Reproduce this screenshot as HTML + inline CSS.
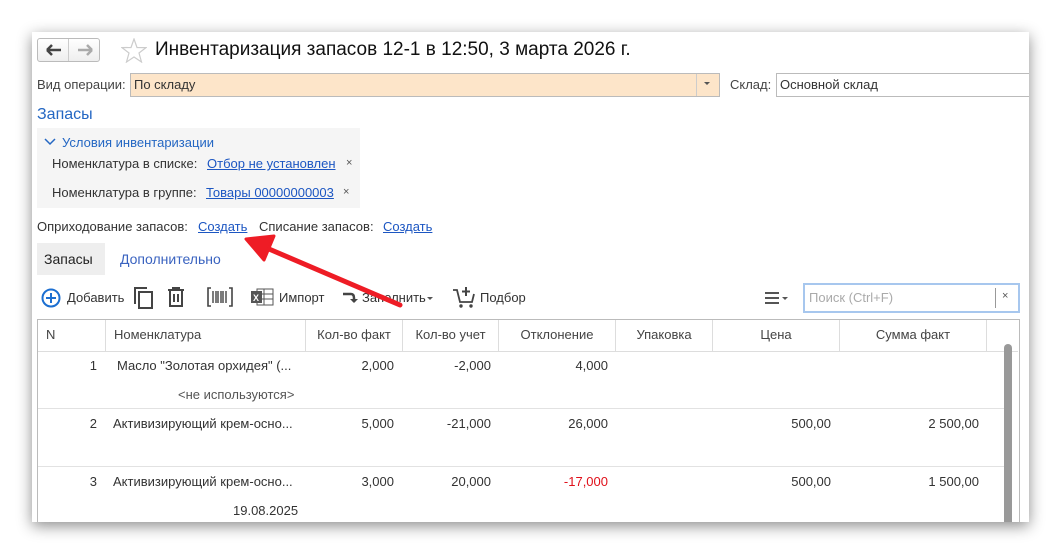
<!DOCTYPE html>
<html><head><meta charset="utf-8"><style>
*{margin:0;padding:0;box-sizing:border-box}
body{width:1061px;height:556px;background:#fff;font-family:"Liberation Sans",Arial,sans-serif;font-size:13px;color:#333;position:relative;overflow:hidden}
.a{position:absolute;white-space:nowrap}
.win{position:absolute;left:32px;top:32px;width:997px;height:490px;background:#fff;box-shadow:0 4px 14px rgba(0,0,0,.45);overflow:hidden}
.lnk{color:#1c56c2;text-decoration:underline}
.blue{color:#2467c3}
.th{position:absolute;top:0;height:31px;line-height:30px;border-right:1px solid #ddd;color:#444}
.r{text-align:right}
</style></head><body>
<div class="win">
 <div class="a" style="left:5px;top:6px;width:63px;height:24px;border:1px solid #bbb;border-radius:3px;background:linear-gradient(#fff,#eee)"></div>
 <div class="a" style="left:36px;top:7px;width:1px;height:22px;background:#ccc"></div>
 <svg class="a" style="left:14px;top:12px" width="16" height="12"><path d="M1 6H15M1 6L6 1M1 6L6 11" stroke="#444" stroke-width="2.5" fill="none"/></svg>
 <svg class="a" style="left:45px;top:12px" width="16" height="12"><path d="M1 6H15M15 6L10 1M15 6L10 11" stroke="#aaa" stroke-width="2.5" fill="none"/></svg>
 <svg class="a" style="left:89px;top:6px" width="26" height="25"><path d="M13 1L16 9.5L25 9.6L18 15L20.5 24L13 19L5.5 24L8 15L1 9.6L10 9.5Z" fill="none" stroke="#ccc" stroke-width="1.2"/></svg>
 <div class="a" style="left:123px;top:7px;font-size:19px;color:#111">Инвентаризация запасов 12-1 в 12:50, 3 марта 2026 г.</div>

 <div class="a" style="left:5px;top:45px;color:#444">Вид операции:</div>
 <div class="a" style="left:98px;top:41px;width:590px;height:24px;border:1px solid #bbb;background:#fde5c9;padding:3px 3px;color:#333">По складу</div>
 <div class="a" style="left:664px;top:42px;width:1px;height:22px;background:#ccc"></div>
 <div class="a" style="left:672px;top:50px;border-left:3px solid transparent;border-right:3px solid transparent;border-top:3px solid #555"></div>
 <div class="a" style="left:698px;top:45px;color:#444">Склад:</div>
 <div class="a" style="left:744px;top:41px;width:260px;height:24px;border:1px solid #bbb;padding:3px 3px;color:#333">Основной склад</div>

 <div class="a blue" style="left:5px;top:74px;font-size:16px">Запасы</div>
 <div class="a" style="left:5px;top:96px;width:323px;height:80px;background:#f5f5f5"></div>
 <svg class="a" style="left:12px;top:106px" width="12" height="8"><path d="M1 1L6 6L11 1" stroke="#2467c3" stroke-width="1.5" fill="none"/></svg>
 <div class="a blue" style="left:30px;top:103px">Условия инвентаризации</div>
 <div class="a" style="left:20px;top:124px;color:#333">Номенклатура в списке:</div>
 <div class="a lnk" style="left:175px;top:124px">Отбор не установлен</div>
 <div class="a" style="left:314px;top:125px;color:#555;font-size:11px">×</div>
 <div class="a" style="left:20px;top:153px;color:#333">Номенклатура в группе:</div>
 <div class="a lnk" style="left:174px;top:153px">Товары 00000000003</div>
 <div class="a" style="left:311px;top:154px;color:#555;font-size:11px">×</div>

 <div class="a" style="left:5px;top:187px">Оприходование запасов:</div>
 <div class="a lnk" style="left:166px;top:187px">Создать</div>
 <div class="a" style="left:227px;top:187px">Списание запасов:</div>
 <div class="a lnk" style="left:351px;top:187px">Создать</div>

 <div class="a" style="left:5px;top:211px;width:68px;height:32px;background:#eee"></div>
 <div class="a" style="left:12px;top:219px;font-size:14px;color:#222">Запасы</div>
 <div class="a" style="left:88px;top:219px;font-size:14px;color:#3a63c0">Дополнительно</div>

 <svg class="a" style="left:9px;top:256px" width="20" height="20"><circle cx="10" cy="10" r="8.5" fill="none" stroke="#1c6fd1" stroke-width="2"/><path d="M10 5V15M5 10H15" stroke="#1c6fd1" stroke-width="2"/></svg>
 <div class="a" style="left:35px;top:258px;color:#333">Добавить</div>
 <svg class="a" style="left:101px;top:254px" width="22" height="24"><path d="M2 18V2H14" stroke="#444" stroke-width="2" fill="none"/><rect x="6" y="6" width="13" height="16" stroke="#444" stroke-width="2" fill="none"/></svg>
 <svg class="a" style="left:135px;top:255px" width="18" height="20"><path d="M1 3H17M6 3V1H12V3M3 3V19H15V3M7 7V15M11 7V15" stroke="#444" stroke-width="2" fill="none"/></svg>
 <svg class="a" style="left:175px;top:255px" width="26" height="20"><path d="M4 1H1V19H4M22 1H25V19H22" stroke="#444" stroke-width="1.6" fill="none"/><path d="M6 4V16M9 4V16M11 4V16M14 4V16M16 4V16M19 4V16" stroke="#444" stroke-width="1.4"/></svg>
 <svg class="a" style="left:218px;top:256px" width="24" height="18"><rect x="7" y="1" width="16" height="16" fill="none" stroke="#555"/><path d="M7 6H23M7 11H23M14 1V17" stroke="#555"/><rect x="1" y="3" width="11" height="12" fill="#555"/><text x="3" y="13" font-size="9" fill="#fff" font-family="Liberation Sans" font-weight="bold">X</text></svg>
 <div class="a" style="left:247px;top:258px">Импорт</div>
 <svg class="a" style="left:310px;top:258px" width="16" height="14"><path d="M1 4H9Q12 4 12 8V12" stroke="#444" stroke-width="2.5" fill="none"/><path d="M8 9L12 13L16 9" fill="#444"/></svg>
 <div class="a" style="left:330px;top:258px">Заполнить</div>
 <div class="a" style="left:395px;top:265px;border-left:3px solid transparent;border-right:3px solid transparent;border-top:3px solid #555"></div>
 <svg class="a" style="left:420px;top:253px" width="24" height="24"><path d="M1 5H5L8 17H20L22 9" stroke="#444" stroke-width="1.8" fill="none"/><path d="M14 2V11M10 6.5H18" stroke="#444" stroke-width="2"/><circle cx="9" cy="21" r="1.7" fill="#444"/><circle cx="19" cy="21" r="1.7" fill="#444"/></svg>
 <div class="a" style="left:448px;top:258px">Подбор</div>

 <svg class="a" style="left:732px;top:259px" width="26" height="14"><path d="M1 2H15M1 7H15M1 12H15" stroke="#555" stroke-width="2"/><path d="M18 6H24L21 9Z" fill="#555"/></svg>
 <div class="a" style="left:771px;top:251px;width:217px;height:30px;border:2px solid #a7c7ee;padding:5px 4px;color:#aaa">Поиск (Ctrl+F)</div>
 <div class="a" style="left:963px;top:256px;width:1px;height:20px;background:#999"></div>
 <div class="a" style="left:970px;top:258px;color:#555;font-size:11px">×</div>

 <div class="a" style="left:5px;top:287px;width:983px;height:210px;border:1px solid #bbb;border-right:none;border-bottom:none">
  <div class="a" style="left:0;top:0;width:980px;height:32px;border-bottom:1px solid #ddd"></div>
  <div class="th" style="left:0;width:68px;padding-left:8px">N</div>
  <div class="th" style="left:68px;width:200px;padding-left:8px">Номенклатура</div>
  <div class="th" style="left:268px;width:97px;text-align:center">Кол-во факт</div>
  <div class="th" style="left:365px;width:96px;text-align:center">Кол-во учет</div>
  <div class="th" style="left:461px;width:117px;text-align:center">Отклонение</div>
  <div class="th" style="left:578px;width:97px;text-align:center">Упаковка</div>
  <div class="th" style="left:675px;width:127px;text-align:center">Цена</div>
  <div class="th" style="left:802px;width:147px;text-align:center">Сумма факт</div>
  <div class="th" style="left:949px;width:31px;border-right:none"></div>
  <div class="a" style="left:966px;top:24px;width:8px;height:190px;background:#999;border-radius:4px"></div>

  <div class="a" style="left:0;top:88px;width:966px;height:1px;background:#e2e2e2"></div>
  <div class="a" style="left:0;top:146px;width:966px;height:1px;background:#e2e2e2"></div>

  <div class="a r" style="left:0;top:38px;width:59px">1</div>
  <div class="a" style="left:79px;top:38px">Масло "Золотая орхидея" (...</div>
  <div class="a r" style="left:268px;top:38px;width:88px">2,000</div>
  <div class="a r" style="left:365px;top:38px;width:88px">-2,000</div>
  <div class="a r" style="left:461px;top:38px;width:109px">4,000</div>
  <div class="a" style="left:140px;top:67px;color:#555">&lt;не используются&gt;</div>

  <div class="a r" style="left:0;top:96px;width:59px">2</div>
  <div class="a" style="left:75px;top:96px">Активизирующий крем-осно...</div>
  <div class="a r" style="left:268px;top:96px;width:88px">5,000</div>
  <div class="a r" style="left:365px;top:96px;width:88px">-21,000</div>
  <div class="a r" style="left:461px;top:96px;width:109px">26,000</div>
  <div class="a r" style="left:675px;top:96px;width:118px">500,00</div>
  <div class="a r" style="left:802px;top:96px;width:139px">2 500,00</div>

  <div class="a r" style="left:0;top:154px;width:59px">3</div>
  <div class="a" style="left:75px;top:154px">Активизирующий крем-осно...</div>
  <div class="a r" style="left:268px;top:154px;width:88px">3,000</div>
  <div class="a r" style="left:365px;top:154px;width:88px">20,000</div>
  <div class="a r" style="left:461px;top:154px;width:109px;color:#e0101a">-17,000</div>
  <div class="a r" style="left:675px;top:154px;width:118px">500,00</div>
  <div class="a r" style="left:802px;top:154px;width:139px">1 500,00</div>
  <div class="a" style="left:195px;top:183px">19.08.2025</div>
 </div>
 <div class="a" style="left:987px;top:287px;width:1px;height:210px;background:#bbb"></div>
</div>
<svg class="a" style="left:0;top:0" width="1061" height="556"><path d="M400 305L262 246" stroke="#ee1c25" stroke-width="5" stroke-linecap="round"/><path d="M246 239L274 236L264 260Z" fill="#ee1c25" stroke="#ee1c25" stroke-width="3" stroke-linejoin="round"/></svg>
</body></html>
